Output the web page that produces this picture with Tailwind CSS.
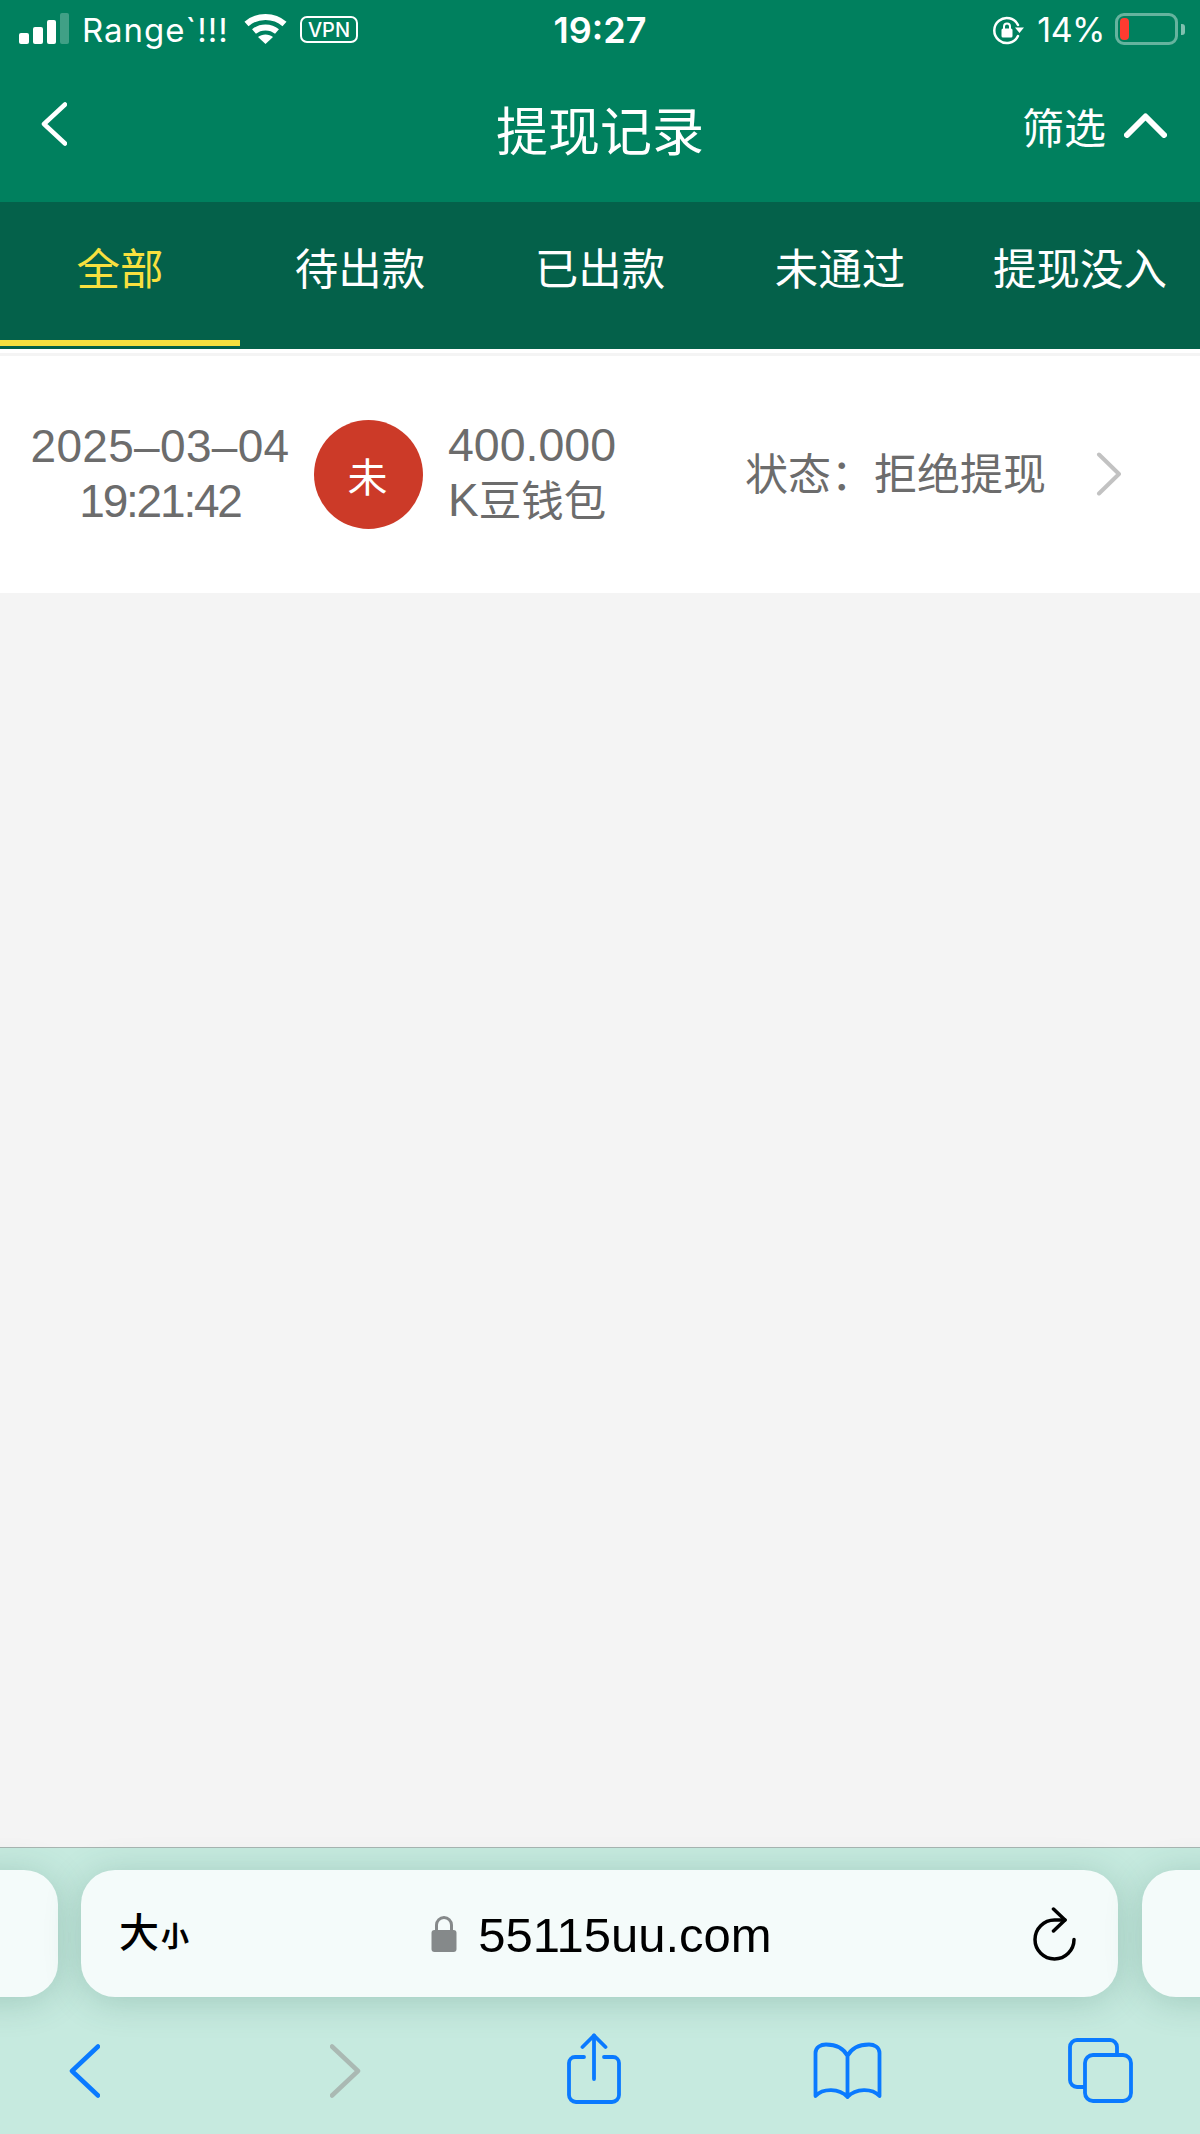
<!DOCTYPE html>
<html lang="zh">
<head>
<meta charset="utf-8">
<script src="https://cdn.jsdelivr.net/npm/@tailwindcss/browser@4"></script>
</head>
<body class="m-0">
<div class="w-[1200px] h-[2134px] flex flex-col overflow-hidden bg-[#f4f4f4] font-['Liberation_Sans','Noto_Sans_CJK_SC',sans-serif]">

  <!-- green header -->
  <header class="h-[202px] bg-[#00805e] text-white">
    <div class="h-[68px] grid grid-cols-[1fr_auto_1fr] items-start font-['Inter','Noto_Sans_CJK_SC',sans-serif]">
      <div class="flex items-start pl-[19px] pt-[13px]">
        <div class="flex items-end gap-[4px] h-[31px]">
          <span class="w-[10px] h-[11px] rounded-[2px] bg-white"></span>
          <span class="w-[10px] h-[17px] rounded-[2px] bg-white"></span>
          <span class="w-[9px] h-[24px] rounded-[2px] bg-white"></span>
          <span class="w-[9px] h-[31px] rounded-[2px] bg-white/25"></span>
        </div>
        <span class="ml-[13px] w-[149px] -mt-[3px] text-[33px] leading-[40px] tracking-[1px] whitespace-nowrap">Range`!!!</span>
        <svg class="ml-[13px]" width="43" height="31" viewBox="0 0 43 31" fill="none" stroke="white" stroke-linecap="butt">
          <path d="M2.500 11C13 1.500 30 1.500 40.500 11" stroke-width="6"/>
          <path d="M10 18.500C16.500 13 26.500 13 33 18.500" stroke-width="6"/>
          <path d="M21.500 31L14 24C18 20.500 25 20.500 29 24Z" fill="white" stroke="none"/>
        </svg>
        <span class="ml-[13px] mt-[3px] w-[58px] h-[27px] rounded-[7px] border-2 border-white flex items-center justify-center text-[20px] leading-none font-medium">VPN</span>
      </div>
      <div class="pt-[10px] text-[36px] leading-[40px] font-semibold">19:27</div>
      <div class="flex items-start justify-end pr-[15px] pt-[13px]">
        <svg class="mt-[3px]" width="32" height="29" viewBox="0 0 32 29" fill="none" stroke="white">
          <path d="M26 20A12.500 12.500 0 1 1 26 9" stroke-width="2.500" stroke-linecap="round"/>
          <path d="M32 11.500H23L27.500 17Z" fill="white" stroke="none"/>
          <rect x="9.500" y="12.500" width="11" height="9" rx="1.500" fill="white" stroke="none"/>
          <path d="M12 13V10.500A3 3 0 0 1 18 10.500V13" stroke-width="2"/>
        </svg>
        <span class="ml-[13px] -mt-[3px] text-[34px] leading-[40px] tracking-[-0.500px] font-normal">14%</span>
        <div class="ml-[10px] w-[63px] h-[32px] rounded-[9px] border-[3px] border-white/40 p-[2px]">
          <div class="w-[9px] h-[22px] rounded-[4px] bg-[#ff3b30]"></div>
        </div>
        <div class="ml-[3px] mt-[11px] w-[4px] h-[11px] rounded-r-[3px] bg-white/50"></div>
      </div>
    </div>
    <div class="h-[134px] grid grid-cols-[1fr_auto_1fr] items-start">
      <div class="pl-[41px] pt-[34px]">
        <svg class="block" width="26" height="44" viewBox="0 0 26 44" fill="none" stroke="white" stroke-width="4.500" stroke-linecap="round" stroke-linejoin="round"><path d="M24 2.500L3 22L24 41.500"/></svg>
      </div>
      <h1 class="pt-[35px] text-[52px] leading-[60px] font-normal">提现记录</h1>
      <div class="flex items-start justify-end pr-[33px] pt-[38px]">
        <span class="text-[42px] leading-[48px]">筛选</span>
        <svg class="ml-[18px] mt-[7px]" width="43" height="25" viewBox="0 0 43 25" fill="none" stroke="white" stroke-width="6" stroke-linecap="round" stroke-linejoin="round"><path d="M3 22L21.500 3.500L40 22"/></svg>
      </div>
    </div>
  </header>

  <!-- tabs -->
  <nav class="h-[147px] bg-[#04614a] pb-[3px] grid grid-cols-5 text-white text-[43.500px] leading-[50px]">
    <div class="h-[144px] border-b-[6px] border-[#f8e03f] text-[#f8e03f] flex justify-center pt-[43px]">全部</div>
    <div class="h-[144px] flex justify-center pt-[43px]">待出款</div>
    <div class="h-[144px] flex justify-center pt-[43px]">已出款</div>
    <div class="h-[144px] flex justify-center pt-[43px]">未通过</div>
    <div class="h-[144px] flex justify-center pt-[43px]">提现没入</div>
  </nav>
  <div class="h-[4px] bg-white"></div>
  <div class="h-[3px] bg-[#f4f4f4]"></div>

  <!-- record row -->
  <section class="h-[237px] bg-white flex items-center text-[#6c6c6c]">
    <div class="w-[320px] text-center leading-[55px] -mt-[2px]">
      <div class="text-[46px] tracking-[0.3px]">2025–03–04</div>
      <div class="text-[46px] tracking-[-2.200px]">19:21:42</div>
    </div>
    <div class="-ml-[6px] w-[109px] h-[109px] rounded-full bg-[#cc3a28] text-white text-[40px] leading-none flex items-center justify-center"><span class="mt-[7px] -ml-[2px]">未</span></div>
    <div class="ml-[25px] w-[297px] leading-[55px] -mt-[2px]">
      <div class="text-[46.500px]">400.000</div>
      <div class="text-[42.500px]"><span class="text-[46px]">K</span>豆钱包</div>
    </div>
    <div class="text-[43px] leading-[50px] -mt-[4px]">状态<span class="font-['Noto_Sans_CJK_TC']">：</span>拒绝提现</div>
    <svg class="ml-[50px] -mt-[1px]" width="26" height="44" viewBox="0 0 26 44" fill="none" stroke="#c2c2c2" stroke-width="4" stroke-linecap="round" stroke-linejoin="round"><path d="M3 2.500L23 22L3 41.500"/></svg>
  </section>

  <main class="flex-1"></main>

  <!-- browser chrome -->
  <footer class="h-[287px] border-t border-[#a8b5b1] bg-[#c6eadf]">
    <div class="pt-[22px] flex gap-[23px] -ml-[60px]">
      <div class="w-[118px] h-[127px] shrink-0 rounded-[34px] bg-[#f4fbfa] shadow-[0_4px_36px_rgba(40,100,85,0.24)]"></div>
      <div class="w-[1037px] h-[127px] shrink-0 rounded-[34px] bg-[#f4fbfa] shadow-[0_4px_36px_rgba(40,100,85,0.24)] grid grid-cols-[1fr_auto_1fr] items-center text-black font-['Inter','Liberation_Sans','Noto_Sans_CJK_SC',sans-serif]">
        <div class="pl-[38px] flex items-baseline font-medium -mt-[2px]">
          <span class="text-[40px] leading-none">大</span><span class="ml-[2px] text-[28px] leading-none font-semibold">小</span>
        </div>
        <div class="flex items-center">
          <svg class="ml-[4px]" width="26" height="37" viewBox="0 0 26 37" fill="none"><path d="M5.500 17V10A7.500 7.500 0 0 1 20.500 10V17" stroke="#85898a" stroke-width="3"/><rect x="0.500" y="15" width="25" height="22" rx="3" fill="#85898a"/></svg>
          <span class="ml-[21px] mt-[2px] text-[49px] leading-[56px] font-['Liberation_Sans',sans-serif]">55115uu.com</span>
        </div>
        <div class="flex justify-end pr-[41px]">
          <svg width="44" height="54" viewBox="0 0 44 54" fill="none" stroke="black" stroke-width="3.500" stroke-linecap="round" stroke-linejoin="round"><path d="M41 32.500A19.500 19.500 0 1 1 21.500 13H32"/><path d="M20.500 2L32 13L20.500 24"/></svg>
        </div>
      </div>
      <div class="ml-[1px] w-[118px] h-[127px] shrink-0 rounded-[34px] bg-[#f4fbfa] shadow-[0_4px_36px_rgba(40,100,85,0.24)]"></div>
    </div>
    <div class="h-[138px] pl-[69px] flex items-start">
      <svg class="mt-[47px]" width="31" height="54" viewBox="0 0 31 54" fill="none" stroke="#0a7aff" stroke-width="4.500" stroke-linecap="round" stroke-linejoin="round"><path d="M29 2.500L3 27L29 51.500"/></svg>
      <svg class="ml-[230px] mt-[47px]" width="31" height="54" viewBox="0 0 31 54" fill="none" stroke="#aab9b3" stroke-width="4.500" stroke-linecap="round" stroke-linejoin="round"><path d="M2 2.500L28 27L2 51.500"/></svg>
      <svg class="ml-[206px] mt-[36px]" width="54" height="71" viewBox="0 0 54 71" fill="none" stroke="#0a7aff" stroke-width="3.800" stroke-linecap="round" stroke-linejoin="round"><path d="M17 24H8A6 6 0 0 0 2 30V62A7 7 0 0 0 9 69H45A7 7 0 0 0 52 62V30A6 6 0 0 0 46 24H37"/><path d="M27 46V2.500"/><path d="M15.500 14L27 2.500L38.500 14"/></svg>
      <svg class="ml-[192px] mt-[45px]" width="69" height="57" viewBox="0 0 69 57" fill="none" stroke="#0a7aff" stroke-width="3.800" stroke-linecap="round" stroke-linejoin="round"><path d="M34.500 14C30 5 21 2.500 13 2.500C8 2.500 2.500 5 2.500 11V54C10 46 26 46 34.500 55C43 46 59 46 66.500 54V11C66.500 5 61 2.500 56 2.500C48 2.500 39 5 34.500 14V55"/></svg>
      <svg class="ml-[186px] mt-[41px]" width="65" height="65" viewBox="0 0 65 65" fill="none" stroke="#0a7aff" stroke-width="3.800" stroke-linejoin="round"><path d="M49 17V9A7 7 0 0 0 42 2H9A7 7 0 0 0 2 9V42A7 7 0 0 0 9 49H17"/><rect x="17" y="17" width="46" height="46" rx="8"/></svg>
    </div>
  </footer>
</div>
</body>
</html>
